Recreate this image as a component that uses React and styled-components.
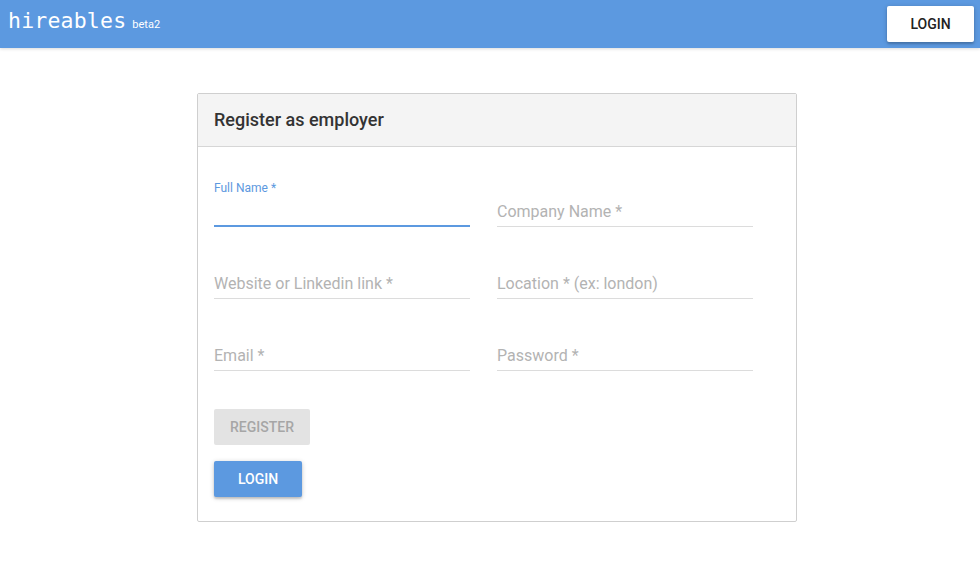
import React from "react";
import styled, { createGlobalStyle } from "styled-components";

const fields = [
  { name: "fullName", label: "Full Name *", focused: true },
  { name: "company", label: "Company Name *" },
  { name: "website", label: "Website or Linkedin link *" },
  { name: "location", label: "Location * (ex: london)" },
  { name: "email", label: "Email *" },
  { name: "password", label: "Password *", type: "password" },
];

export default function App() {
  return (
    <>
      <GlobalStyle />
      <TopBar>
        <Brand>
          <Logo>hireables</Logo>
          <Beta>beta2</Beta>
        </Brand>
        <BarButton>Login</BarButton>
      </TopBar>
      <Main>
        <Card>
          <CardHeader>
            <CardTitle>Register as employer</CardTitle>
          </CardHeader>
          <CardBody>
            <FieldGrid>
              {fields.map((f) => (
                <Field key={f.name}>
                  {f.focused ? <SmallLabel>{f.label}</SmallLabel> : <LabelSpace />}
                  <Input
                    type={f.type || "text"}
                    placeholder={f.focused ? "" : f.label}
                    $focused={f.focused}
                  />
                </Field>
              ))}
            </FieldGrid>
            <Actions>
              <Button disabled>Register</Button>
              <Button $primary>Login</Button>
            </Actions>
          </CardBody>
        </Card>
      </Main>
    </>
  );
}

//styles
const GlobalStyle = createGlobalStyle`
  body {
    margin: 0;
    font-family: Roboto, "Liberation Sans", sans-serif;
    background: #fff;
  }
  * { box-sizing: border-box; }
`;
const TopBar = styled.header`
  height: 48px;
  background: #5c99e0;
  display: flex;
  align-items: center;
  justify-content: space-between;
  padding: 0 6px 0 8px;
  box-shadow: 0 1px 3px rgba(0, 0, 0, 0.15);
`;
const Brand = styled.div`
  display: flex;
  align-items: baseline;
  gap: 6px;
  color: #fff;
  margin-top: -7px;
`;
const Logo = styled.span`
  font-family: "DejaVu Sans Mono", "Liberation Mono", monospace;
  font-size: 21.5px;
  font-weight: 400;
  letter-spacing: 0.2px;
`;
const Beta = styled.span`
  font-family: Roboto, sans-serif;
  font-size: 11px;
`;
const BarButton = styled.button`
  width: 87px;
  height: 36px;
  border: none;
  border-radius: 2px;
  background: #fff;
  color: #222;
  font-family: Roboto, sans-serif;
  font-weight: 500;
  font-size: 14px;
  text-transform: uppercase;
  box-shadow: 0 1px 5px rgba(0, 0, 0, 0.2), 0 2px 2px rgba(0, 0, 0, 0.14);
`;
const Main = styled.main`
  display: flex;
  justify-content: center;
  padding: 45px 0 0 14px;
`;
const Card = styled.section`
  width: 600px;
  border: 1px solid #cfcfcf;
  border-radius: 2px;
  background: #fff;
`;
const CardHeader = styled.div`
  height: 53px;
  background: #f4f4f4;
  border-bottom: 1px solid #d6d6d6;
  display: flex;
  align-items: center;
  padding: 0 16px 2px;
`;
const CardTitle = styled.h2`
  margin: 0;
  font-size: 18px;
  font-weight: 500;
  color: #333;
`;
const CardBody = styled.div`
  padding: 16px 16px 24px;
`;
const FieldGrid = styled.div`
  display: grid;
  grid-template-columns: 256px 256px;
  column-gap: 27px;
  row-gap: 24px;
  margin-top: 16px;
`;
const Field = styled.div`
  display: flex;
  flex-direction: column;
  height: 48px;
`;
const SmallLabel = styled.label`
  height: 16px;
  font-size: 12px;
  color: #5c99e0;
  padding-top: 2px;
`;
const LabelSpace = styled.div`
  height: 16px;
`;
const Input = styled.input`
  height: 32px;
  border: none;
  border-bottom: ${({ $focused }) => ($focused ? "2px solid #5c99e0" : "1px solid #dcdcdc")};
  padding: 6px 0 ${({ $focused }) => ($focused ? "3px" : "4px")};
  font-family: Roboto, sans-serif;
  font-size: 16px;
  color: #333;
  outline: none;
  background: transparent;
  &::placeholder {
    color: #b3b3b3;
    opacity: 1;
  }
`;
const Actions = styled.div`
  display: flex;
  flex-direction: column;
  align-items: flex-start;
  gap: 16px;
  margin-top: 38px;
`;
const Button = styled.button`
  height: 36px;
  padding: 0 16px;
  min-width: 88px;
  border: none;
  border-radius: 2px;
  font-family: Roboto, sans-serif;
  font-size: 14px;
  font-weight: 500;
  text-transform: uppercase;
  background: ${({ $primary }) => ($primary ? "#5c99e0" : "#e3e3e3")};
  color: ${({ $primary }) => ($primary ? "#fff" : "#a6a6a6")};
  box-shadow: ${({ $primary }) =>
    $primary ? "0 1px 5px rgba(0,0,0,0.2), 0 2px 2px rgba(0,0,0,0.14)" : "none"};
`;
